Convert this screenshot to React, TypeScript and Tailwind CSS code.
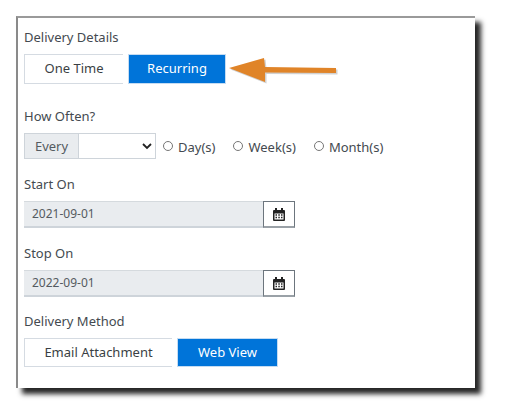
export default function App() {
  const font = { fontFamily: '"Noto Sans", "Open Sans", sans-serif' };
  const Cal = () => (
    <svg width="14" height="15" viewBox="0 0 14 15" fill="none">
      <rect x="1" y="3" width="12" height="11" rx="1" fill="#222" />
      <rect x="3" y="1" width="2" height="3" fill="#222" />
      <rect x="9" y="1" width="2" height="3" fill="#222" />
      <rect x="2.5" y="6.5" width="9" height="6" fill="#fff" />
      <path d="M3.5 8h1.5M6.3 8h1.5M9 8h1.5M3.5 10.5h1.5M6.3 10.5h1.5M9 10.5h1.5" stroke="#222" strokeWidth="1.3" />
    </svg>
  );
  const Radio = ({ label, cls }: { label: string; cls: string }) => (
    <label className={`flex items-center ${cls}`}>
      <span className="w-[10px] h-[10px] rounded-full border border-[#767676] bg-white mr-[5px] mb-[1px]" />
      <span className="pt-[3px]">{label}</span>
    </label>
  );
  const DateRow = ({ value }: { value: string }) => (
    <div className="flex h-[27px] w-[271px]">
      <div className="w-[239px] bg-[#e9ecef] border-b-2 border-[#ced4da] border-t border-t-[#d5dade] flex items-center pl-[8px] text-[12px] text-[#555b61]">
        {value}
      </div>
      <div className="flex-1 border border-[#6c757d] border-b-2 border-b-[#9aa1a7] flex items-center justify-center bg-white">
        <Cal />
      </div>
    </div>
  );
  return (
    <div className="w-[506px] h-[419px] bg-white pt-[16px] pl-[16px] overflow-hidden" style={font}>
      <div className="relative w-[459px] h-[372px] bg-white border-l-2 border-t-2 border-l-[#8a8a8a] border-t-[#9a9a9a] shadow-[6px_6px_5px_rgba(0,0,0,0.85)] pl-[6px] text-[13px] text-[#444a50]">
        <div className="h-[36px] pt-[10px] leading-[18px]">Delivery Details</div>
        <div className="flex h-[30px] gap-[5px] text-[13px]">
          <div className="w-[99px] border border-[#d5dbe2] border-r-0 flex items-center justify-center text-[#3a3f44]">One Time</div>
          <div className="w-[98px] bg-[#0074d9] border border-[#c5dcf2] flex items-center justify-center text-white">Recurring</div>
        </div>
        <div className="mt-[22px] h-[20px] leading-[20px]">How Often?</div>
        <div className="mt-[7px] flex items-center h-[26px]">
          <div className="flex w-[132px] h-[26px] border border-[#ced4da]">
            <div className="w-[54px] bg-[#e9ecef] border-r border-[#ced4da] flex items-center justify-center pt-[2px] text-[#555b61]">Every</div>
            <div className="flex-1 bg-white flex items-center justify-end pr-[3px]">
              <svg width="10" height="8" viewBox="0 0 10 8" fill="none">
                <path d="M1 2l4 4 4-4" stroke="#222" strokeWidth="1.8" />
              </svg>
            </div>
          </div>
          <Radio label="Day(s)" cls="ml-[7px]" />
          <Radio label="Week(s)" cls="ml-[18px]" />
          <Radio label="Month(s)" cls="ml-[18px]" />
        </div>
        <div className="mt-[15px] h-[20px] leading-[20px]">Start On</div>
        <div className="mt-[7px]"><DateRow value="2021-09-01" /></div>
        <div className="mt-[15px] h-[20px] leading-[20px]">Stop On</div>
        <div className="mt-[7px]"><DateRow value="2022-09-01" /></div>
        <div className="mt-[14px] h-[20px] leading-[20px]">Delivery Method</div>
        <div className="mt-[7px] flex h-[29px] gap-[5px]">
          <div className="w-[148px] border border-[#d5dbe2] border-r-0 flex items-center justify-center text-[#3a3f44]">Email Attachment</div>
          <div className="w-[101px] bg-[#0074d9] border border-[#c5dcf2] flex items-center justify-center text-white">Web View</div>
        </div>
        <svg className="absolute left-[210px] top-[38px]" width="112" height="30" viewBox="0 0 112 30" fill="none">
          <path d="M1 12 L36 2 L37 11 L108 12 L108 17 L37 16.5 L37 26 Z" fill="#7a7a7a" opacity="0.35" transform="translate(1.5 1.5)" />
          <path d="M1 12 L36 2 L37 11 L108 12 L108 17 L37 16.5 L37 26 Z" fill="#e08428" />
        </svg>
      </div>
    </div>
  );
}
